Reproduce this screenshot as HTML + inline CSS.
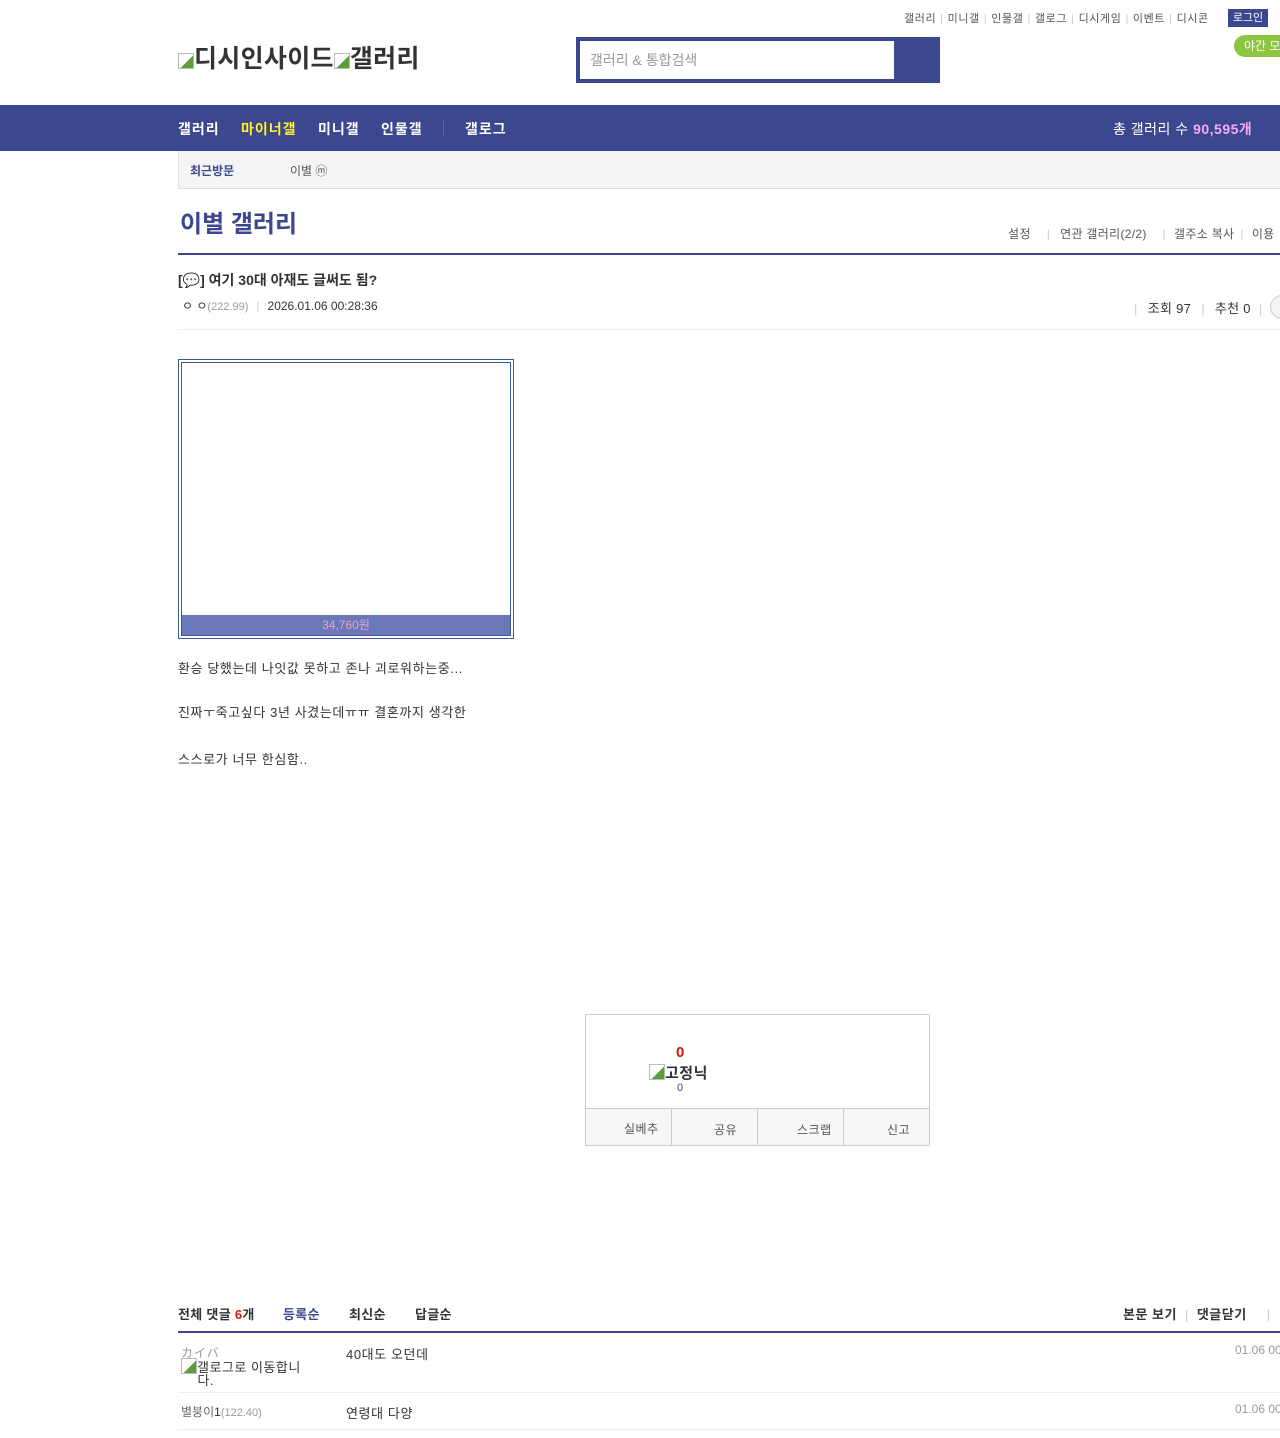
<!DOCTYPE html>
<html><head><meta charset="utf-8"><style>
*{margin:0;padding:0;box-sizing:border-box}
html,body{width:1280px;height:1438px;overflow:hidden;background:#fff}
body{position:relative;font-family:"Liberation Sans","Noto Sans CJK KR",sans-serif;color:#333}
.a{position:absolute;white-space:nowrap}
.sep{color:#ccc;margin:0 4px}
.bimg{display:inline-block;width:16px;height:16px;border:1px solid #bbb;background:linear-gradient(135deg,#fff 55%,#5a9e3a 56%);vertical-align:-2px}
</style></head><body>
<div class="a" style="left:904px;top:10px;font-size:11px;color:#555;letter-spacing:0.6px">갤러리<span class="sep">|</span>미니갤<span class="sep">|</span>인물갤<span class="sep">|</span>갤로그<span class="sep">|</span>디시게임<span class="sep">|</span>이벤트<span class="sep">|</span>디시콘</div>
<div class="a" style="left:1228px;top:9px;width:40px;height:18px;background:#3b4890;color:#fff;font-size:11px;text-align:center;line-height:18px">로그인</div>
<div class="a" style="left:1234px;top:35px;width:60px;height:22px;background:#8cc63f;border-radius:11px;color:#fff;font-size:12px;line-height:22px;padding-left:10px">야간 모드</div>
<div class="a" style="left:178px;top:39px;font-size:25px;font-weight:bold;color:#333;letter-spacing:0.3px"><span class="bimg"></span>디시인사이드<span class="bimg"></span>갤러리</div>
<div class="a" style="left:576px;top:37px;width:364px;height:46px;background:#3b4890"></div>
<div class="a" style="left:580px;top:41px;width:314px;height:38px;background:#fff;font-size:14px;color:#999;line-height:38px;padding-left:10px">갤러리 &amp; 통합검색</div>
<div class="a" style="left:0;top:105px;width:1280px;height:46px;background:#3b4890"></div>
<div class="a" style="left:178px;top:119px;font-size:14px;font-weight:bold;color:#fff;letter-spacing:1px">갤러리</div>
<div class="a" style="left:241px;top:119px;font-size:14px;font-weight:bold;color:#fff12a;letter-spacing:1px">마이너갤</div>
<div class="a" style="left:318px;top:119px;font-size:14px;font-weight:bold;color:#fff;letter-spacing:1px">미니갤</div>
<div class="a" style="left:381px;top:119px;font-size:14px;font-weight:bold;color:#fff;letter-spacing:1px">인물갤</div>
<div class="a" style="left:443px;top:121px;width:1px;height:14px;background:#5a66a8"></div>
<div class="a" style="left:465px;top:119px;font-size:14px;font-weight:bold;color:#fff;letter-spacing:1px">갤로그</div>
<div class="a" style="left:1113px;top:119px;font-size:14px;color:#fff;letter-spacing:0.5px">총 갤러리 수 <b style="color:#fba8f5">90,595개</b></div>
<div class="a" style="left:178px;top:151px;width:1110px;height:38px;background:#f4f4f4;border:1px solid #ddd;border-top:none"></div>
<div class="a" style="left:190px;top:162px;font-size:12px;font-weight:bold;color:#3b4890">최근방문</div>
<div class="a" style="left:290px;top:162px;font-size:12px;color:#555">이별 ⓜ</div>
<div class="a" style="left:180px;top:204px;font-size:24px;font-weight:bold;color:#3b4890">이별 갤러리</div>
<div class="a" style="left:1008px;top:225px;font-size:12px;color:#555;letter-spacing:0.3px">설정<span class="sep" style="margin:0 10px 0 16px">|</span>연관 갤러리(2/2)<span class="sep" style="margin:0 8px 0 16px">|</span>갤주소 복사<span class="sep" style="margin:0 8px 0 6px">|</span>이용</div>
<div class="a" style="left:178px;top:253px;width:1110px;height:2px;background:#3b4890"></div>
<div class="a" style="left:178px;top:270px;font-size:14px;font-weight:bold;color:#333">[💬] 여기 30대 아재도 글써도 됨?</div>
<div class="a" style="left:182px;top:297px;font-size:12px;color:#333">ㅇ ㅇ<span style="font-size:11px;color:#999">(222.99)</span><span class="sep" style="margin:0 8px">|</span>2026.01.06 00:28:36</div>
<div class="a" style="left:1134px;top:298px;font-size:13px;color:#333;letter-spacing:0.3px"><span class="sep" style="margin:0 10px 0 0">|</span>조회 97<span class="sep" style="margin:0 10px">|</span>추천 0<span class="sep" style="margin:0 8px">|</span></div>
<div class="a" style="left:1270px;top:295px;width:24px;height:24px;border:1px solid #ccc;border-radius:12px;background:#f4f4f4"></div>
<div class="a" style="left:178px;top:329px;width:1110px;height:1px;background:#eee"></div>
<div class="a" style="left:178px;top:359px;width:336px;height:280px;border:1px solid #3b5a9a"></div>
<div class="a" style="left:181px;top:362px;width:330px;height:274px;border:1px solid #3b5a9a"></div>
<div class="a" style="left:182px;top:615px;width:328px;height:20px;background:#6a78b8;color:#f0a0c8;font-size:12px;text-align:center;line-height:20px">34,760원</div>
<div class="a" style="left:178px;top:658px;font-size:13px;color:#333;letter-spacing:0.6px">환승 당했는데 나잇값 못하고 존나 괴로워하는중...</div>
<div class="a" style="left:178px;top:702px;font-size:13px;color:#333;letter-spacing:0.6px">진짜ㅜ죽고싶다 3년 사겼는데ㅠㅠ 결혼까지 생각한</div>
<div class="a" style="left:178px;top:749px;font-size:13px;color:#333;letter-spacing:0.6px">스스로가 너무 한심함..</div>
<div class="a" style="left:585px;top:1014px;width:345px;height:132px;border:1px solid #ccc"></div>
<div class="a" style="left:676px;top:1044px;font-size:15px;font-weight:bold;color:#d31900">0</div>
<div class="a" style="left:649px;top:1062px;font-size:15px;font-weight:bold;color:#333;letter-spacing:0.5px"><span class="bimg"></span>고정닉</div>
<div class="a" style="left:677px;top:1082px;font-size:11px;color:#3b4890">0</div>
<div class="a" style="left:586px;top:1108px;width:343px;height:37px;background:#f7f7f7;border-top:1px solid #ccc"></div>
<div class="a" style="left:671px;top:1109px;width:1px;height:36px;background:#ccc"></div>
<div class="a" style="left:757px;top:1109px;width:1px;height:36px;background:#ccc"></div>
<div class="a" style="left:843px;top:1109px;width:1px;height:36px;background:#ccc"></div>
<div class="a" style="left:624px;top:1120px;font-size:12px;color:#555;letter-spacing:0.5px">실베추</div>
<div class="a" style="left:714px;top:1121px;font-size:12px;color:#555;letter-spacing:0.5px">공유</div>
<div class="a" style="left:797px;top:1121px;font-size:12px;color:#555;letter-spacing:0.5px">스크랩</div>
<div class="a" style="left:887px;top:1121px;font-size:12px;color:#555;letter-spacing:0.5px">신고</div>
<div class="a" style="left:178px;top:1304px;font-size:13px;font-weight:bold;color:#333;letter-spacing:0.3px">전체 댓글 <span style="color:#d31900">6</span>개</div>
<div class="a" style="left:283px;top:1304px;font-size:13px;font-weight:bold;color:#3b4890;letter-spacing:0.3px">등록순</div>
<div class="a" style="left:349px;top:1304px;font-size:13px;font-weight:bold;color:#333;letter-spacing:0.3px">최신순</div>
<div class="a" style="left:415px;top:1304px;font-size:13px;font-weight:bold;color:#333;letter-spacing:0.3px">답글순</div>
<div class="a" style="left:1123px;top:1304px;font-size:13px;font-weight:bold;color:#333;letter-spacing:0.5px">본문 보기<span class="sep" style="margin:0 8px;font-weight:normal">|</span>댓글닫기<span class="sep" style="margin:0 0 0 20px;font-weight:normal">|</span></div>
<div class="a" style="left:178px;top:1331px;width:1110px;height:2px;background:#3b4890"></div>
<div class="a" style="left:181px;top:1344px;font-size:12px;color:#999;letter-spacing:1px">カイバ</div>
<div class="a" style="left:181px;top:1358px;font-size:13px;color:#333;line-height:13px;width:130px;white-space:normal;letter-spacing:0.5px"><span class="bimg"></span>갤로그로 이동합니<br>&nbsp;&nbsp;&nbsp;&nbsp;다.</div>
<div class="a" style="left:346px;top:1344px;font-size:13px;color:#333;letter-spacing:0.6px">40대도 오던데</div>
<div class="a" style="left:1235px;top:1343px;font-size:12px;color:#999">01.06 00:</div>
<div class="a" style="left:178px;top:1392px;width:1110px;height:1px;background:#eee"></div>
<div class="a" style="left:181px;top:1403px;font-size:12px;color:#666">별붕이<b style="color:#333;font-weight:normal">1</b><span style="font-size:11px;color:#999">(122.40)</span></div>
<div class="a" style="left:346px;top:1403px;font-size:13px;color:#333;letter-spacing:0.6px">연령대 다양</div>
<div class="a" style="left:1235px;top:1402px;font-size:12px;color:#999">01.06 00:</div>
<div class="a" style="left:178px;top:1429px;width:1110px;height:1px;background:#eee"></div>
</body></html>
